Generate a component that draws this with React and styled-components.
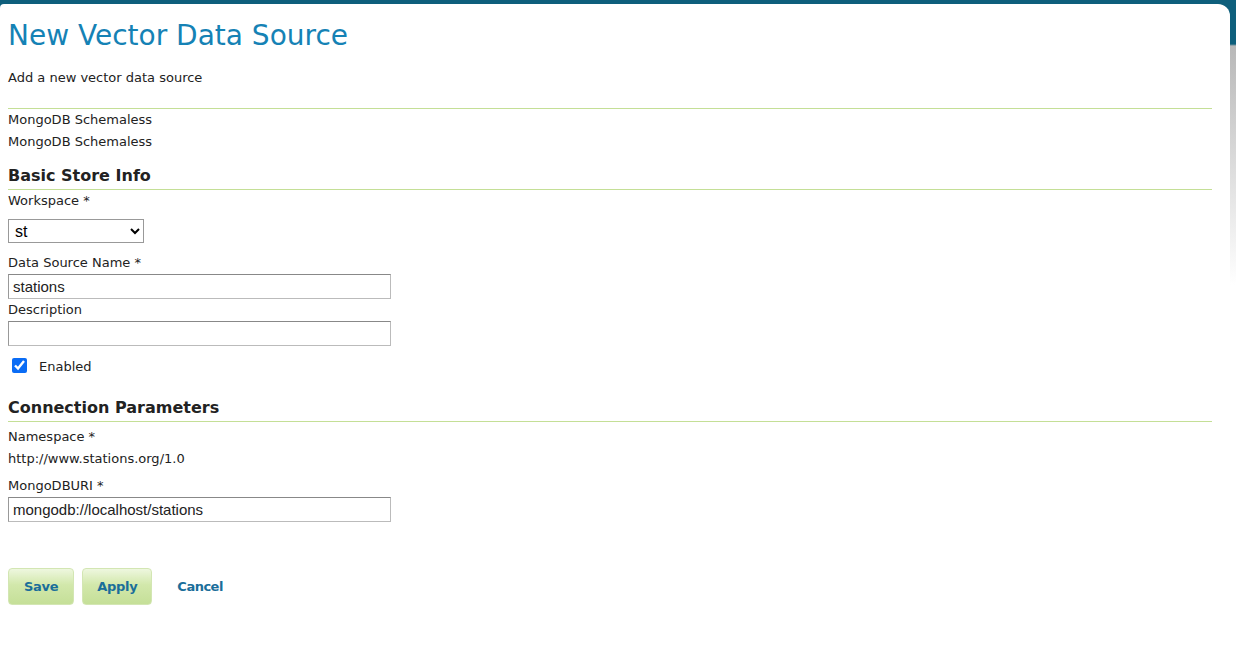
import React from "react";
import styled, { createGlobalStyle } from "styled-components";

const GlobalStyle = createGlobalStyle`
  html, body {
    margin: 0;
    padding: 0;
    background: #fff;
  }
  body {
    font-family: "DejaVu Sans", Verdana, sans-serif;
    font-size: 13px;
    color: #222;
  }
`;

// teal header band on top, grey scroll shadow on the right below it
const Frame = styled.div`
  min-height: 662px;
  padding: 4px 6px 0 0;
  box-sizing: border-box;
  background: linear-gradient(
    to bottom,
    #0e5f7c 0,
    #0e5f7c 44px,
    #b8b8b8 46px,
    #e6e6e6 200px,
    #ffffff 285px
  );
`;

const Panel = styled.div`
  background: #fff;
  border-radius: 4px 12px 0 0;
  min-height: 658px;
  padding: 14px 18px 0 8px;
  box-sizing: border-box;
`;

const Title = styled.h1`
  margin: 0;
  font-weight: normal;
  font-size: 28px;
  line-height: 36px;
  color: #1582b5;
`;

const Lead = styled.p`
  margin: 15px 0 21px;
  line-height: 18px;
`;

const Rule = styled.div`
  border-top: 1px solid #c4df96;
`;

const Line = styled.div`
  line-height: 22px;
`;

const SectionTitle = styled.h2`
  margin: ${(p) => p.$top || 0}px 0 0;
  padding-bottom: 2px;
  font-size: 16px;
  line-height: 22px;
  font-weight: bold;
  border-bottom: 1px solid #c4df96;
`;

const Field = styled.div`
  display: flex;
  flex-direction: column;
  align-items: flex-start;
  margin-top: ${(p) => p.$top || 0}px;
`;

const Label = styled.label`
  line-height: 22px;
`;

const Select = styled.select`
  margin-top: 7px;
  width: 136px;
  height: 24px;
  font-family: "Liberation Sans", Arial, sans-serif;
  font-size: 16px;
  color: #000;
  border: 1px solid #999;
  border-radius: 0;
  background: #fff;
  padding: 0 2px;
`;

const TextInput = styled.input`
  width: 383px;
  height: 25px;
  box-sizing: border-box;
  border: 1px solid #bbb;
  border-top-color: #888;
  border-left-color: #999;
  padding: 0 4px;
  font-family: "Liberation Sans", Arial, sans-serif;
  font-size: 15px;
  color: #222;
`;

const CheckRow = styled.label`
  display: flex;
  align-items: flex-start;
  gap: 12px;
  margin: 8px 0 0 4px;

  input {
    width: 15px;
    height: 15px;
    margin: 4px 0 0;
    accent-color: #0a6cf5;
  }

  span {
    padding-top: 2px;
    line-height: 22px;
  }
`;

const Value = styled.div`
  line-height: 22px;
`;

const Actions = styled.div`
  display: flex;
  align-items: center;
  gap: 8px;
  margin-top: 46px;
`;

const Button = styled.button`
  height: 37px;
  padding: 0 ${(p) => p.$pad || 15}px;
  border: 1px solid #d3e6b3;
  border-radius: 4px;
  background: linear-gradient(to bottom, #eef7df 0%, #d2e8ab 45%, #c5df98 100%);
  font-family: "DejaVu Sans", Verdana, sans-serif;
  font-size: 13px;
  font-weight: bold;
  letter-spacing: -0.3px;
  color: #1a6e9a;
  cursor: pointer;
`;

const CancelLink = styled.a`
  margin-left: 17px;
  font-size: 13px;
  font-weight: bold;
  letter-spacing: -0.5px;
  color: #1a6e9a;
  text-decoration: none;
`;

export default function App() {
  return (
    <>
      <GlobalStyle />
      <Frame>
        <Panel>
          <Title>New Vector Data Source</Title>
          <Lead>Add a new vector data source</Lead>
          <Rule />
          <Line>MongoDB Schemaless</Line>
          <Line>MongoDB Schemaless</Line>

          <SectionTitle $top={12}>Basic Store Info</SectionTitle>
          <Field>
            <Label>Workspace *</Label>
            <Select defaultValue="st">
              <option value="st">st</option>
            </Select>
          </Field>
          <Field $top={9}>
            <Label>Data Source Name *</Label>
            <TextInput defaultValue="stations" />
          </Field>
          <Field>
            <Label>Description</Label>
            <TextInput defaultValue="" />
          </Field>
          <CheckRow>
            <input type="checkbox" defaultChecked />
            <span>Enabled</span>
          </CheckRow>

          <SectionTitle $top={19}>Connection Parameters</SectionTitle>
          <Field $top={4}>
            <Label>Namespace *</Label>
            <Value>http://www.stations.org/1.0</Value>
          </Field>
          <Field $top={5}>
            <Label>MongoDBURI *</Label>
            <TextInput defaultValue="mongodb://localhost/stations" />
          </Field>

          <Actions>
            <Button $pad={15}>Save</Button>
            <Button $pad={14}>Apply</Button>
            <CancelLink href="#">Cancel</CancelLink>
          </Actions>
        </Panel>
      </Frame>
    </>
  );
}
